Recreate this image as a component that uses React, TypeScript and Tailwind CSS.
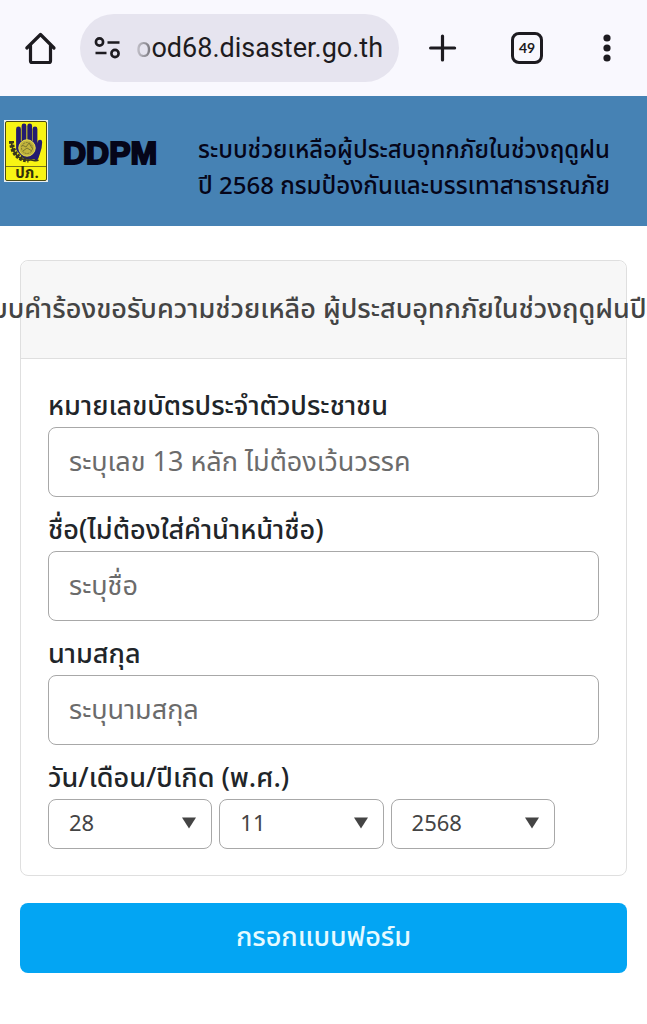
import { useState } from "react";

const fontStack = "font-['Noto_Sans_Thai','Noto_Sans','Open_Sans',sans-serif]";

function Toolbar() {
  return (
    <nav aria-label="Browser" className="flex h-24 items-center bg-[#f9f8fe] text-[#1d1b20]">
      <button type="button" aria-label="Home" className="flex w-20 shrink-0 justify-center">
        <svg width="34" height="34" viewBox="0 0 34 34" fill="none" stroke="currentColor" strokeWidth="3.200" strokeLinecap="round" strokeLinejoin="round">
          <path d="M3.800 17 17.500 3.500 31 17M7.500 14.500V30a1.500 1.500 0 0 0 1.500 1.500h17a1.500 1.500 0 0 0 1.500-1.500V14.500" />
        </svg>
      </button>
      <div className="flex h-17 min-w-0 flex-1 items-center gap-4 rounded-full bg-[#e6e4ef] px-3">
        <button type="button" aria-label="Site information" className="shrink-0">
          <svg width="28" height="24" viewBox="0 0 28 24" fill="none" stroke="currentColor" strokeWidth="2.600">
            <circle cx="7.500" cy="6" r="3.600" />
            <path d="M15.500 6.500h12M3.500 17h11" />
            <circle cx="23" cy="17.500" r="3.600" />
          </svg>
        </button>
        <span className="whitespace-nowrap font-['Roboto',sans-serif] text-[27px] leading-9">
          <span className="bg-linear-to-r from-[#c9c7d0] to-[#77757c] bg-clip-text text-transparent">o</span>
          od68.disaster.go.th
        </span>
      </div>
      <div className="flex shrink-0 items-center">
        <button type="button" aria-label="New tab" className="flex w-22 justify-center">
          <svg width="28" height="28" viewBox="0 0 28 28" stroke="currentColor" strokeWidth="3.200" strokeLinecap="round">
            <path d="M13.500 2v24M1.600 14h24" />
          </svg>
        </button>
        <button type="button" aria-label="49 open tabs" className="flex w-20 justify-center">
          <span className="flex size-8 items-center justify-center rounded-lg border-3 border-[#1d1b20] font-['Lato',sans-serif] text-sm font-bold">49</span>
        </button>
        <button type="button" aria-label="More options" className="flex w-20 justify-center">
          <svg width="8" height="28" viewBox="0 0 8 28" fill="currentColor">
            <circle cx="4" cy="4" r="3.600" />
            <circle cx="4" cy="14" r="3.600" />
            <circle cx="4" cy="24" r="3.600" />
          </svg>
        </button>
      </div>
    </nav>
  );
}

function Emblem() {
  return (
    <svg width="44" height="62" viewBox="0 0 44 62" role="img" aria-label="ปภ." className="shrink-0">
      <rect width="44" height="62" fill="#e9eef0" />
      <rect x="1.500" y="1.500" width="41" height="59" rx="1.500" fill="#f8f414" stroke="#4d4b12" />
      <path d="M2 46.500h40" stroke="#77751a" />
      <g stroke="#241b70" strokeLinecap="round" fill="none">
        <path d="M14.500 9v20M20 6v20M25.700 6v20M31 9v22" strokeWidth="4.800" />
        <path d="M36 22c0 8-2 10-4 16" strokeWidth="4.400" />
      </g>
      <path d="M13 21h20l3 8-2 10H20l-7-8z" fill="#241b70" />
      <circle cx="23" cy="28" r="8.200" fill="#c2b53d" stroke="#ece34d" />
      <g stroke="#756f2d" fill="none" strokeWidth="0.900">
        <circle cx="23" cy="28" r="5.500" strokeDasharray="2 1" />
        <path d="M18 25l4 2 3-4 3 5M19 31l4-3 5 3" />
      </g>
      <path d="M7.500 21c0 11 7 19 17 19" fill="none" stroke="#38351d" strokeWidth="5" strokeDasharray="2.500 1.400" />
      <path d="M7.500 21c0 11 7 20 18 19 4-1 5 2 9 0" fill="none" stroke="#38351d" strokeWidth="1.800" />
      <text x="23" y="58" textAnchor="middle" fontSize="15" fontWeight="700" fontFamily="Noto Sans Thai, Noto Sans, sans-serif" fill="#33300a">ปภ.</text>
    </svg>
  );
}

function Banner() {
  return (
    <header className="flex h-[130px] items-center bg-[#4682b4] pl-1 text-[#050519]">
      <div className="flex w-[194px] shrink-0 items-center gap-[15px] pb-5">
        <Emblem />
        <span className="pt-1 font-['Liberation_Sans',sans-serif] text-[32px] font-bold leading-10 [-webkit-text-stroke:2px_#050519] [stroke-linejoin:round]">DDPM</span>
      </div>
      <h1 className="whitespace-nowrap pt-4 text-2xl font-medium leading-9">
        ระบบช่วยเหลือผู้ประสบอุทกภัยในช่วงฤดูฝน
        <br />
        ปี 2568 กรมป้องกันและบรรเทาสาธารณภัย
      </h1>
    </header>
  );
}

function TextField({ id, label, placeholder }: { id: string; label: string; placeholder: string }) {
  return (
    <div className="flex flex-col">
      <label htmlFor={id} className="text-[27px] font-medium leading-10">{label}</label>
      <input
        id={id}
        type="text"
        placeholder={placeholder}
        className="h-[70px] w-full rounded-lg border border-[#a8a8a8] bg-white px-5 text-[27px] text-[#444] placeholder:text-[#6b6b6b]"
      />
    </div>
  );
}

function DateSelect({ label, value, options }: { label: string; value: string; options: string[] }) {
  const [selected, setSelected] = useState(value);
  return (
    <div className="relative flex-1">
      <select
        aria-label={label}
        value={selected}
        onChange={(e) => setSelected(e.target.value)}
        className="block h-[50px] w-full appearance-none rounded-lg border border-[#a8a8a8] bg-white pl-5 text-[22px] text-[#444]"
      >
        {options.map((o) => (
          <option key={o}>{o}</option>
        ))}
      </select>
      <svg width="14" height="12" viewBox="0 0 14 12" className="pointer-events-none absolute right-4 top-[18px]" fill="#444">
        <path d="M0 0.500h14L7 11.500z" />
      </svg>
    </div>
  );
}

const range = (from: number, to: number) =>
  Array.from({ length: to - from + 1 }, (_, i) => String(from + i));

export default function App() {
  return (
    <div className={`min-h-screen overflow-x-hidden bg-white text-[#212529] ${fontStack}`}>
      <Toolbar />
      <Banner />
      <main className="px-5 pb-12 pt-[34px]">
        <form className="flex flex-col gap-[27px]" onSubmit={(e) => e.preventDefault()}>
          <section className="rounded-lg border border-[#dfdfdf]">
            <div className="flex h-[98px] items-center justify-center rounded-t-lg border-b border-[#dfdfdf] bg-[#f7f7f7] pr-8">
              <h2 className="whitespace-nowrap text-[27px] font-medium leading-9 text-[#444]">
                ระบบคำร้องขอรับความช่วยเหลือ ผู้ประสบอุทกภัยในช่วงฤดูฝนปี
              </h2>
            </div>
            <div className="flex flex-col gap-[14px] px-[27px] pb-[26px] pt-7">
              <TextField id="citizen-id" label="หมายเลขบัตรประจำตัวประชาชน" placeholder="ระบุเลข 13 หลัก ไม่ต้องเว้นวรรค" />
              <TextField id="first-name" label="ชื่อ(ไม่ต้องใส่คำนำหน้าชื่อ)" placeholder="ระบุชื่อ" />
              <TextField id="last-name" label="นามสกุล" placeholder="ระบุนามสกุล" />
              <fieldset>
                <legend className="text-[27px] font-medium leading-10">วัน/เดือน/ปีเกิด (พ.ศ.)</legend>
                <div className="flex w-[92%] gap-[7px]">
                  <DateSelect label="วัน" value="28" options={range(1, 31)} />
                  <DateSelect label="เดือน" value="11" options={range(1, 12)} />
                  <DateSelect label="ปี" value="2568" options={range(2450, 2568)} />
                </div>
              </fieldset>
            </div>
          </section>
          <button type="submit" className="h-[70px] rounded-lg bg-[#03a5f3] text-[27px] font-medium text-[#e6faff]">
            กรอกแบบฟอร์ม
          </button>
        </form>
      </main>
    </div>
  );
}
